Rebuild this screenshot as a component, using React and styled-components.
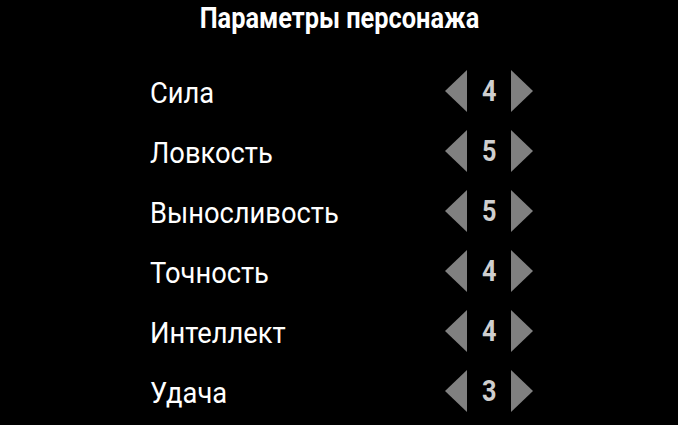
import React from "react";
import styled, { createGlobalStyle } from "styled-components";

const Global = createGlobalStyle`
  html, body { margin: 0; padding: 0; background: #000; }
  body { font-family: Roboto, "Noto Sans", sans-serif; color: #fff; }
`;

const Page = styled.div`
  width: 678px;
  height: 425px;
  background: #000;
  overflow: hidden;
`;

const Title = styled.h1`
  margin: 0;
  height: 36px;
  display: flex;
  justify-content: center;
  font-size: 30px;
  line-height: 35px;
  font-weight: 700;
  color: #fff;
`;

const Condensed = styled.span`
  display: inline-block;
  transform: scaleX(${(p) => p.$sx || 0.91});
  transform-origin: ${(p) => p.$origin || "left"} center;
  white-space: nowrap;
`;

const List = styled.div`
  margin-top: 25px;
  padding-left: 150px;
  width: 383px;
  display: flex;
  flex-direction: column;
`;

const Row = styled.div`
  height: 60px;
  display: flex;
  align-items: center;
`;

const Label = styled.div`
  flex: 1;
  font-size: 30px;
  line-height: 36px;
  padding-top: 3px;
  color: #fff;
`;

const Control = styled.div`
  display: flex;
  align-items: center;
`;

const Arrow = styled.svg`
  width: 22px;
  height: 42px;
  display: block;
`;

const Value = styled.div`
  width: 44px;
  display: flex;
  justify-content: center;
  font-size: 29px;
  line-height: 34px;
  font-weight: 700;
  color: #cfcfcf;
`;

const stats = [
  ["Сила", 4],
  ["Ловкость", 5],
  ["Выносливость", 5],
  ["Точность", 4],
  ["Интеллект", 4],
  ["Удача", 3],
];

export default function App() {
  return (
    <Page>
      <Global />
      <Title>
        <Condensed $origin="center" $sx={0.845}>Параметры персонажа</Condensed>
      </Title>
      <List>
        {stats.map(([name, v]) => (
          <Row key={name}>
            <Label>
              <Condensed>{name}</Condensed>
            </Label>
            <Control>
              <Arrow viewBox="0 0 22 42">
                <polygon points="22,0 22,42 0,21" fill="#808080" />
              </Arrow>
              <Value>
                <Condensed $origin="center" $sx={0.87}>{v}</Condensed>
              </Value>
              <Arrow viewBox="0 0 22 42">
                <polygon points="0,0 0,42 22,21" fill="#808080" />
              </Arrow>
            </Control>
          </Row>
        ))}
      </List>
    </Page>
  );
}
